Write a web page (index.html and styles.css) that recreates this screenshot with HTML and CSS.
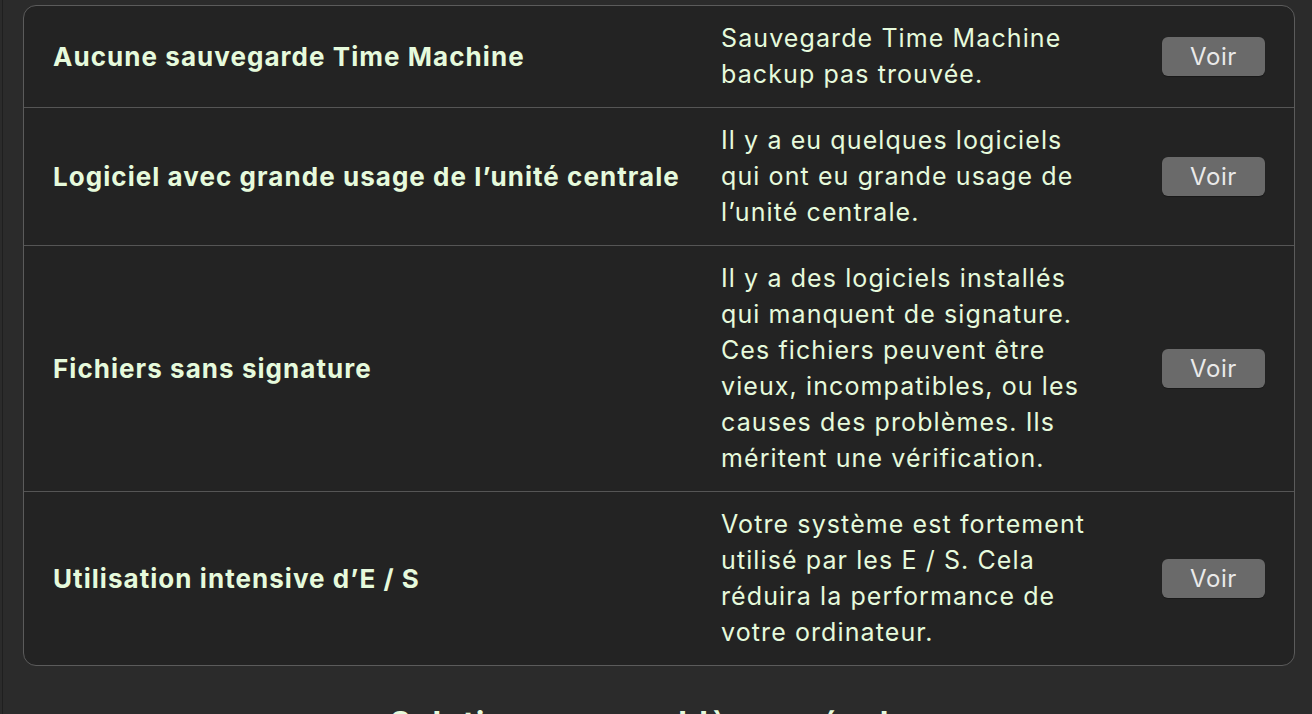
FILE: index.html
```html
<!DOCTYPE html>
<html lang="fr">
<head>
<meta charset="utf-8">
<link rel="stylesheet" href="styles.css">
</head>
<body>
<div class="pane">
  <div class="card">
    <div class="row">
      <div class="title">Aucune sauvegarde Time Machine</div>
      <div class="desc">Sauvegarde Time Machine<br>backup pas trouvée.</div>
      <button class="btn">Voir</button>
    </div>
    <div class="row">
      <div class="title">Logiciel avec grande usage de l’unité centrale</div>
      <div class="desc">Il y a eu quelques logiciels<br>qui ont eu grande usage de<br>l’unité centrale.</div>
      <button class="btn">Voir</button>
    </div>
    <div class="row">
      <div class="title">Fichiers sans signature</div>
      <div class="desc">Il y a des logiciels installés<br>qui manquent de signature.<br>Ces fichiers peuvent être<br>vieux, incompatibles, ou les<br>causes des problèmes. Ils<br>méritent une vérification.</div>
      <button class="btn">Voir</button>
    </div>
    <div class="row">
      <div class="title">Utilisation intensive d’E / S</div>
      <div class="desc">Votre système est fortement<br>utilisé par les E / S. Cela<br>réduira la performance de<br>votre ordinateur.</div>
      <button class="btn">Voir</button>
    </div>
  </div>
  <h2 class="section">Solutions aux problèmes résolus</h2>
</div>
</body>
</html>
```
FILE: styles.css
```css
html, body {
  margin: 0;
  padding: 0;
  background: #2b2b2b;
  height: 100%;
  overflow: hidden;
}
body {
  font-family: Inter, "Noto Sans", sans-serif;
  color: #e6fadc;
  padding-left: 2px;
}
.pane {
  border-left: 1px solid #1f1f1f;
  min-height: 100%;
  padding: 5px 16px 0 20px;
  box-sizing: border-box;
}
.card {
  background: #232323;
  border: 1.5px solid #5b5b5b;
  border-radius: 13px;
  width: 1272px;
  box-sizing: border-box;
}
.row {
  display: grid;
  grid-template-columns: 1fr 421px 103px;
  column-gap: 20px;
  align-items: center;
  padding: 14px 29px 15px 29px;
  border-top: 1.5px solid #555555;
}
.row:first-child {
  border-top: none;
}
.title {
  font-weight: 700;
  font-size: 26px;
  letter-spacing: 1.05px;
  white-space: nowrap;
}
.desc {
  font-size: 25px;
  line-height: 36px;
  letter-spacing: 1.1px;
  white-space: nowrap;
}
.btn {
  height: 39px;
  background: #6a6a6a;
  border: none;
  border-radius: 6px;
  color: #e9e9e9;
  font-family: Inter, "Noto Sans", sans-serif;
  font-size: 24px;
  letter-spacing: 0.6px;
  padding: 0;
  box-shadow: 0 1px 1px rgba(0,0,0,0.3);
}
.section {
  margin: 38px 0 0;
  text-align: center;
  font-size: 32px;
  letter-spacing: 1px;
  font-weight: 700;
  color: #e6fadc;
}
```
